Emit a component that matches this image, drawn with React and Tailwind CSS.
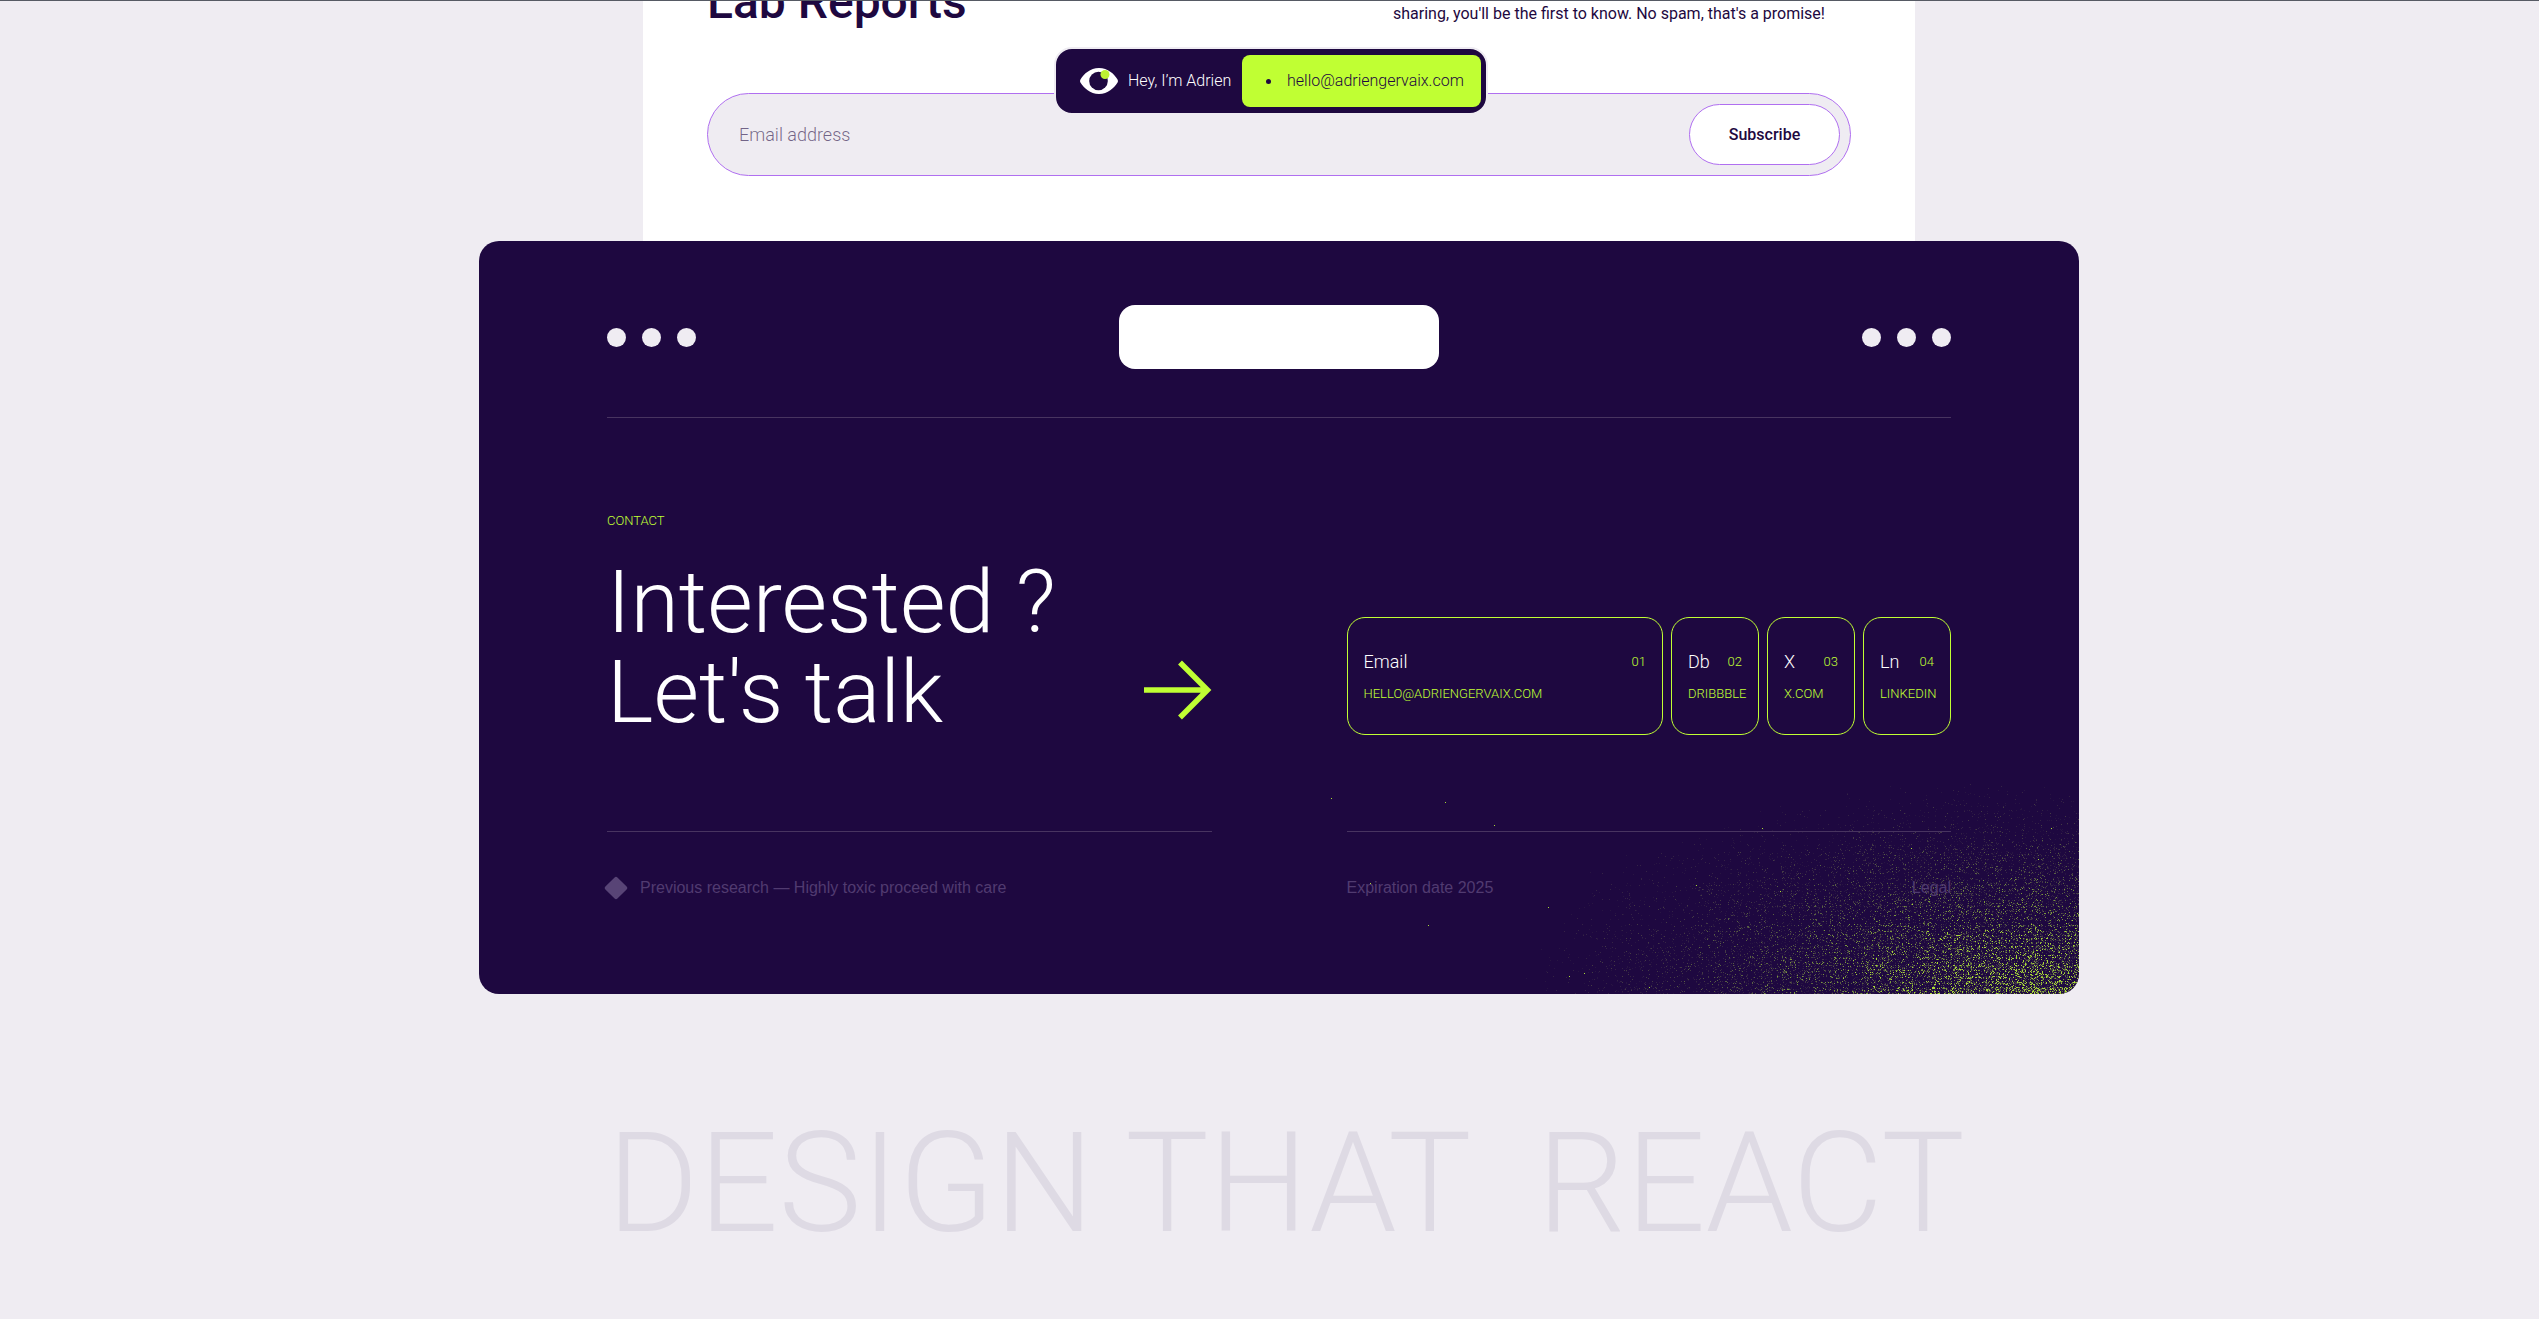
import { useMemo } from 'react';

const LINKS = [
  { name: 'Email', index: '01', label: 'hello@adriengervaix.com', href: 'mailto:hello@adriengervaix.com' },
  { name: 'Db', index: '02', label: 'Dribbble', href: '#dribbble' },
  { name: 'X', index: '03', label: 'x.com', href: '#x' },
  { name: 'Ln', index: '04', label: 'LinkedIn', href: '#linkedin' },
];

const SPORE_COLORS = ['#281542', '#342345', '#443a45', '#596043', '#7b983c', '#a8d836'];
const FIELD_W = 760;
const FIELD_H = 210;

function createRandom(seed) {
  let s = seed;
  return () => {
    s = (s + 0x6d2b79f5) | 0;
    let t = Math.imul(s ^ (s >>> 15), 1 | s);
    t = (t + Math.imul(t ^ (t >>> 7), 61 | t)) ^ t;
    return ((t ^ (t >>> 14)) >>> 0) / 4294967296;
  };
}

// One path per shade; the grain thickens toward the bottom right corner.
function buildSpores() {
  const rand = createRandom(7);
  const rows = Array.from({ length: FIELD_H }, () => 0.5 + rand());
  const cols = Array.from({ length: FIELD_W }, () => 0.5 + rand());
  const paths = SPORE_COLORS.map(() => []);
  for (let y = 0; y < FIELD_H; y++) {
    for (let x = 0; x < FIELD_W; x++) {
      const dx = Math.max(0, FIELD_W - 50 - x) / 530;
      const dy = (FIELD_H - y) / 225;
      const near = Math.max(0, 1 - Math.sqrt(dx * dx + dy * dy));
      const p = Math.pow(near, 1.6) * 0.55 * rows[y] * cols[x];
      if (rand() < p) {
        const glow = Math.min(0.999, Math.pow(rand(), 1.2) * (0.2 + near));
        paths[Math.floor(glow * SPORE_COLORS.length)].push(`M${x} ${y}h1v1h-1z`);
      } else if (rand() < 0.0001) {
        paths[5].push(`M${x} ${y}h1v1h-1z`);
      }
    }
  }
  return paths.map((p) => p.join(''));
}

function Spores() {
  const paths = useMemo(buildSpores, []);
  return (
    <svg
      aria-hidden="true"
      className="pointer-events-none absolute right-0 bottom-0"
      width={FIELD_W}
      height={FIELD_H}
      viewBox={`0 0 ${FIELD_W} ${FIELD_H}`}
      shapeRendering="crispEdges"
    >
      {paths.map((d, i) => (
        <path key={SPORE_COLORS[i]} d={d} fill={SPORE_COLORS[i]} />
      ))}
    </svg>
  );
}

function EyeLogo() {
  return (
    <svg width="38" height="26" viewBox="0 0 38 26" aria-hidden="true">
      <path d="M.6 11.200C4 6 10 0 19 0s15 6 18.400 11.200q1.100 1.800 0 3.600C34 20 28 26 19 26S4 20 .6 14.800q-1.100-1.800 0-3.600z" fill="#fff" />
      <circle cx="18.500" cy="13" r="9.300" fill="#1e0840" />
      <circle cx="25" cy="6.500" r="4.500" fill="#bdf032" />
    </svg>
  );
}

function Dots() {
  return (
    <div className="flex gap-4">
      <span className="size-[19px] rounded-full bg-[#efecf2]" />
      <span className="size-[19px] rounded-full bg-[#efecf2]" />
      <span className="size-[19px] rounded-full bg-[#efecf2]" />
    </div>
  );
}

function FloatingBar() {
  return (
    <nav className="fixed inset-x-0 top-[47px] z-10 flex justify-center pl-[3px]">
      <div className="flex w-[434px] items-center rounded-[18px] border-2 border-[#efecf2] bg-[#1e0840] py-1.5 pr-[5px] pl-6">
        <a href="#top" className="flex flex-1 items-center gap-2.5 text-white">
          <EyeLogo />
          <span className="text-base font-light whitespace-nowrap">Hey, I’m Adrien</span>
        </a>
        <a
          href="mailto:hello@adriengervaix.com"
          className="flex h-[52px] w-[239px] items-center gap-4 rounded-lg bg-[#c0ff33] pl-6 text-base font-light text-[#1e0840]"
        >
          <span className="size-[5px] rounded-full bg-[#1e0840]" />
          hello@adriengervaix.com
        </a>
      </div>
    </nav>
  );
}

function Newsletter() {
  return (
    <section className="mx-auto w-full max-w-[1272px] overflow-hidden bg-white px-16 pb-[65px]">
      <div className="-mt-[23px] flex items-end justify-between">
        <h2 className="text-5xl leading-[48px] font-medium text-[#1e0840]">Lab Reports</h2>
        <p className="w-[458px] text-base leading-6 text-[#1e0840]">
          sharing, you'll be the first to know. No spam, that's a promise!
        </p>
      </div>
      <form
        className="mt-[67px] flex h-[83px] items-center rounded-full border border-[#b06ff0] bg-[#efecf2] pr-2.5 pl-[31px]"
        onSubmit={(e) => e.preventDefault()}
      >
        <input
          type="email"
          aria-label="Email address"
          placeholder="Email address"
          className="min-w-0 flex-1 bg-transparent text-lg font-light text-[#1e0840] outline-none placeholder:text-[#1e0840]/60"
        />
        <button
          type="submit"
          className="h-[61px] w-[151px] rounded-full border border-[#b06ff0] bg-white text-base font-medium text-[#1e0840]"
        >
          Subscribe
        </button>
      </form>
    </section>
  );
}

function ContactCard() {
  return (
    <footer className="relative mx-auto w-full max-w-[1600px] overflow-hidden rounded-[20px] bg-[#1e0840] px-32 pt-16 pb-[94px]">
      <Spores />
      <div className="flex items-center justify-between border-b border-[#483460] pb-12">
        <Dots />
        <div className="h-16 w-80 rounded-2xl bg-white" />
        <Dots />
      </div>

      <div className="relative mt-[93px] grid grid-cols-2 items-end gap-x-[135px]">
        <div className="flex items-end justify-between">
          <div>
            <p className="text-[13px] leading-5 font-light text-[#c0ff33] uppercase">Contact</p>
            <h2 className="mt-[26px] text-[88px] leading-[90px] font-light text-white">
              Interested ?
              <br />
              Let's talk
            </h2>
          </div>
          <svg className="mb-[17px]" width="68" height="60" viewBox="0 0 68 60" fill="none" aria-hidden="true">
            <path d="M0 30H64M36 2.500L63.500 30 36 57.500" stroke="#c0ff33" strokeWidth="5.500" />
          </svg>
        </div>
        <div className="mb-0.5 grid grid-cols-[minmax(0,1fr)_88px_88px_88px] gap-2">
          {LINKS.map((link) => (
            <a
              key={link.index}
              href={link.href}
              className="flex h-[118px] flex-col justify-center gap-2 rounded-[18px] border border-[#c0ff33] px-4"
            >
              <span className="flex items-center justify-between">
                <span className="text-lg leading-7 font-light text-white">{link.name}</span>
                <span className="text-[13px] leading-5 font-light text-[#c0ff33]">{link.index}</span>
              </span>
              <span className="text-[13px] leading-5 font-light whitespace-nowrap text-[#c0ff33] uppercase">
                {link.label}
              </span>
            </a>
          ))}
        </div>
      </div>

      <div className="relative mt-[94px] grid grid-cols-2 gap-x-[135px] font-['Liberation_Sans',Arial,sans-serif] text-base leading-6 text-[#513b70]">
        <div className="flex items-center gap-3 border-t border-[#483460] pt-11">
          <svg className="-ml-[3px]" width="24" height="24" viewBox="0 0 24 24" aria-hidden="true">
            <rect x="3.500" y="3.500" width="17" height="17" rx="2" transform="rotate(45 12 12)" fill="#584476" />
          </svg>
          <p>Previous research — Highly toxic proceed with care</p>
        </div>
        <div className="flex justify-between border-t border-[#483460] pt-11">
          <p>Expiration date 2025</p>
          <a href="#legal" className="text-[#513b70]">Legal</a>
        </div>
      </div>
    </footer>
  );
}

export default function App() {
  return (
    <div
      id="top"
      className="min-h-screen overflow-hidden border-t border-[#565a64] bg-[#efecf2] pl-[19px] font-['Roboto',Helvetica,Arial,sans-serif]"
    >
      <FloatingBar />
      <Newsletter />
      <ContactCard />
      <p className="mx-auto mt-[119px] w-full max-w-[1344px] text-[140px] leading-[140px] font-light whitespace-pre text-[#dedae4]">
        {'DESIGN THAT  REACT'}
      </p>
    </div>
  );
}
